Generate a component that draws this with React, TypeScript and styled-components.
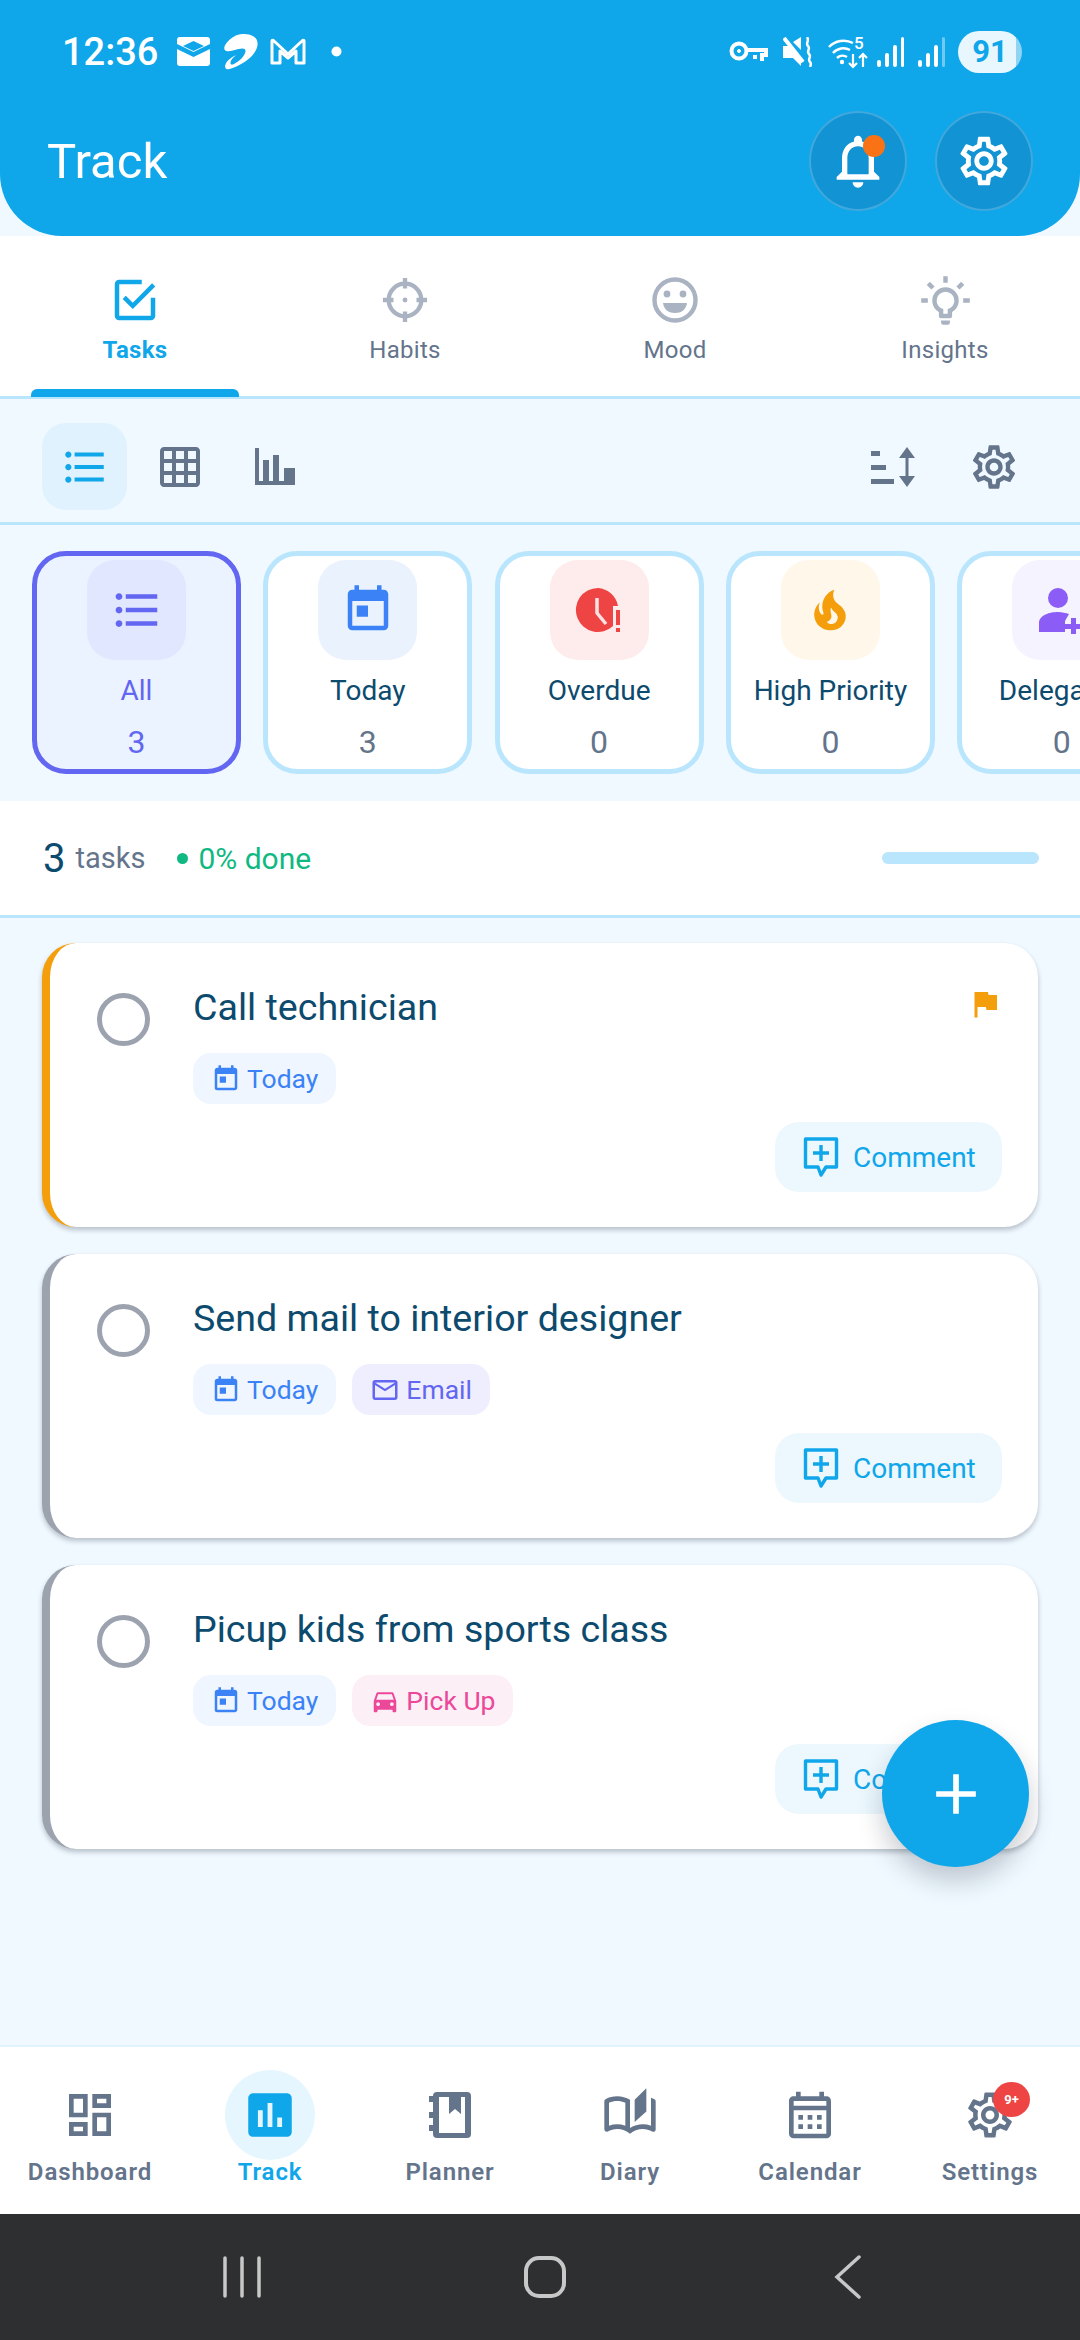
import React from 'react';
import styled, { createGlobalStyle } from 'styled-components';
import {
  MdAdd,
  MdAssessment,
  MdDirectionsCar,
  MdFlag,
  MdFormatListBulleted,
  MdOutlineAutoStories,
  MdOutlineCalendarMonth,
  MdOutlineDashboard,
  MdOutlineEmail,
  MdOutlineGridOn,
  MdOutlineNotifications,
  MdOutlineSettings,
  MdToday,
} from 'react-icons/md';

const GlobalStyle = createGlobalStyle`
  html, body {
    margin: 0;
    padding: 0;
    background: #f0f9ff;
  }
  * {
    box-sizing: border-box;
  }
  body {
    font-family: Roboto, 'Noto Sans', sans-serif;
  }
`;

const Screen = styled.div`
  width: 1080px;
  height: 2340px;
  overflow: hidden;
  position: relative;
  display: flex;
  flex-direction: column;
  background: #f0f9ff;
`;

const Header = styled.header`
  height: 236px;
  flex: none;
  background: #10a6ea;
  border-radius: 0 0 62px 62px;
  color: #fff;
`;

const StatusBar = styled.div`
  height: 103px;
  padding: 0 58px 0 62px;
  display: flex;
  align-items: center;
  justify-content: space-between;
`;

const StatusGroup = styled.div`
  display: flex;
  align-items: center;
`;

const Clock = styled.span`
  font-size: 38px;
  font-weight: 500;
  margin-right: 19px;
`;

const StatusGap = styled.span<{ $w: number }>`
  width: ${(p) => p.$w}px;
`;

const Battery = styled.span`
  width: 64px;
  height: 42px;
  margin-left: 12px;
  border-radius: 21px;
  background: linear-gradient(90deg, #e8f7fe 90%, #8fd3f5 90%);
  color: #10a6ea;
  font-size: 31px;
  font-weight: 700;
  display: flex;
  align-items: center;
  justify-content: center;
`;

const TitleRow = styled.div`
  height: 108px;
  padding: 8px 47px 0;
  display: flex;
  align-items: center;
  justify-content: space-between;
`;

const Title = styled.h1`
  margin: 0;
  font-size: 49px;
  font-weight: 400;
`;

const HeaderActions = styled.div`
  display: flex;
  gap: 28px;
`;

const RoundButton = styled.button`
  width: 98px;
  height: 100px;
  padding: 0;
  position: relative;
  border-radius: 50%;
  border: 2px solid rgba(255, 255, 255, 0.2);
  background: #1193d4;
  color: #fff;
  display: flex;
  align-items: center;
  justify-content: center;
`;

const NotifyDot = styled.span`
  position: absolute;
  top: 22px;
  right: 20px;
  width: 22px;
  height: 22px;
  border-radius: 50%;
  background: #f97316;
`;

const Tabs = styled.nav`
  height: 163px;
  flex: none;
  background: #fff;
  border-bottom: 3px solid #bae6fd;
  display: grid;
  grid-template-columns: repeat(4, 270px);
`;

const Tab = styled.div<{ $active?: boolean }>`
  position: relative;
  padding-top: 38px;
  display: flex;
  flex-direction: column;
  align-items: center;
  color: ${(p) => (p.$active ? '#10a6ea' : '#aab3c1')};
  span {
    margin-top: 10px;
    font-size: 24px;
    line-height: 28px;
    letter-spacing: 0.3px;
    font-weight: ${(p) => (p.$active ? 700 : 400)};
    color: ${(p) => (p.$active ? '#10a6ea' : '#64748b')};
  }
`;

const TabIcon = styled.div`
  height: 52px;
  display: flex;
  align-items: center;
  justify-content: center;
`;

const TabMarker = styled.i`
  position: absolute;
  left: 31px;
  right: 31px;
  bottom: -1px;
  height: 8px;
  border-radius: 6px 6px 0 0;
  background: #10a6ea;
`;

const Toolbar = styled.div`
  height: 126px;
  flex: none;
  padding: 24px 44px 0 42px;
  border-bottom: 3px solid #bae6fd;
  display: flex;
  align-items: flex-start;
  justify-content: space-between;
`;

const ToolGroup = styled.div<{ $gap: number }>`
  display: flex;
  align-items: center;
  gap: ${(p) => p.$gap}px;
`;

const ToolButton = styled.div<{ $active?: boolean }>`
  width: 85px;
  height: 87px;
  border-radius: 24px;
  background: ${(p) => (p.$active ? '#e0f2fe' : 'transparent')};
  color: ${(p) => (p.$active ? '#10a6ea' : '#64748b')};
  display: flex;
  align-items: center;
  justify-content: center;
`;

const FilterStrip = styled.div`
  height: 276px;
  flex: none;
  padding: 26px 0 0 32px;
  display: flex;
  gap: 22.3px;
  overflow: hidden;
`;

const FilterCard = styled.div<{ $active?: boolean }>`
  width: 209px;
  height: 223px;
  flex: none;
  padding-top: 4px;
  border-radius: 34px;
  border: 5px solid ${(p) => (p.$active ? '#6366f1' : '#bae6fd')};
  background: ${(p) => (p.$active ? '#eaf3ff' : '#fff')};
  display: flex;
  flex-direction: column;
  align-items: center;
`;

const FilterTile = styled.div<{ $bg: string; $fg: string }>`
  width: 99px;
  height: 100px;
  flex: none;
  border-radius: 28px;
  background: ${(p) => p.$bg};
  color: ${(p) => p.$fg};
  display: flex;
  align-items: center;
  justify-content: center;
`;

const FilterLabel = styled.div<{ $active?: boolean }>`
  margin-top: 14px;
  font-size: 28px;
  line-height: 33px;
  white-space: nowrap;
  color: ${(p) => (p.$active ? '#6366f1' : '#0c4a6e')};
`;

const FilterCount = styled.div<{ $active?: boolean }>`
  margin-top: 16px;
  font-size: 32px;
  line-height: 38px;
  color: ${(p) => (p.$active ? '#6366f1' : '#64748b')};
`;

const Summary = styled.div`
  height: 117px;
  flex: none;
  padding: 0 41px 0 43px;
  background: #fff;
  border-bottom: 3px solid #bae6fd;
  display: flex;
  align-items: center;
`;

const SummaryCount = styled.span`
  font-size: 40px;
  color: #0c4a6e;
  margin-right: 10px;
`;

const SummaryLabel = styled.span`
  font-size: 29px;
  color: #64748b;
`;

const DoneDot = styled.i`
  width: 11px;
  height: 11px;
  margin: 0 10px 0 32px;
  border-radius: 50%;
  background: #10b981;
`;

const DoneLabel = styled.span`
  font-size: 30px;
  color: #10b981;
`;

const ProgressTrack = styled.div`
  width: 157px;
  height: 12px;
  margin-left: auto;
  border-radius: 6px;
  background: #bae6fd;
`;

const TaskList = styled.div`
  flex: 1;
  min-height: 0;
  padding: 25px 42px 0;
  display: flex;
  flex-direction: column;
  gap: 27px;
`;

const TaskCard = styled.article<{ $accent: string }>`
  height: 284px;
  flex: none;
  position: relative;
  padding: 48px 36px 0 0;
  border-radius: 34px;
  border-left: 8px solid ${(p) => p.$accent};
  background: #fff;
  box-shadow: 0 3px 5px rgba(15, 23, 42, 0.25);
  display: grid;
  grid-template-columns: 143px 1fr;
`;

const CheckCircle = styled.div`
  width: 53px;
  height: 53px;
  margin: 2px 0 0 47px;
  border-radius: 50%;
  border: 5px solid #9ca3af;
`;

const TaskBody = styled.div`
  display: flex;
  flex-direction: column;
`;

const TaskTitle = styled.div`
  height: 35px;
  font-size: 37.6px;
  line-height: 32px;
  color: #0c4a6e;
  display: flex;
  justify-content: space-between;
  svg {
    margin: -5px -1px 0 0;
    color: #f59e0b;
  }
`;

const ChipRow = styled.div`
  margin-top: 27px;
  display: flex;
  gap: 16px;
`;

const Chip = styled.span<{ $bg: string; $fg: string }>`
  height: 51px;
  padding: 0 18px 0 18px;
  border-radius: 18px;
  background: ${(p) => p.$bg};
  color: ${(p) => p.$fg};
  font-size: 26.5px;
  display: flex;
  align-items: center;
  gap: 6px;
`;

const CommentButton = styled.button`
  width: 227px;
  height: 70px;
  margin: 18px 0 0 auto;
  padding: 0 0 0 28px;
  border: 0;
  border-radius: 24px;
  background: #ecf8fe;
  color: #10a6ea;
  font: 400 28px Roboto, sans-serif;
  display: flex;
  align-items: center;
  gap: 14px;
`;

const Fab = styled.button`
  position: absolute;
  left: 882px;
  top: 1720px;
  width: 147px;
  height: 147px;
  padding: 0;
  border: 0;
  border-radius: 50%;
  background: #10a6ea;
  color: #fff;
  box-shadow: 0 14px 26px rgba(15, 23, 42, 0.22);
  display: flex;
  align-items: center;
  justify-content: center;
`;

const BottomNav = styled.nav`
  height: 169px;
  flex: none;
  background: #fff;
  border-top: 2px solid #e0f2fe;
  display: grid;
  grid-template-columns: repeat(6, 180px);
`;

const NavItem = styled.div<{ $active?: boolean }>`
  padding-top: 23px;
  position: relative;
  display: flex;
  flex-direction: column;
  align-items: center;
  color: ${(p) => (p.$active ? '#10a6ea' : '#64748b')};
  span {
    margin-top: -2px;
    font-size: 24px;
    line-height: 28px;
    font-weight: 600;
    letter-spacing: 0.9px;
  }
`;

const NavIcon = styled.div<{ $active?: boolean }>`
  width: 90px;
  height: 90px;
  border-radius: 50%;
  background: ${(p) => (p.$active ? '#e6f6fe' : 'transparent')};
  display: flex;
  align-items: center;
  justify-content: center;
  position: relative;
`;

const NavBadge = styled.b`
  position: absolute;
  top: 12px;
  right: 5px;
  width: 37px;
  height: 35px;
  border-radius: 50%;
  background: #ef4444;
  color: #fff;
  font-size: 13px;
  font-weight: 700;
  display: flex;
  align-items: center;
  justify-content: center;
`;

const SystemBar = styled.div`
  height: 126px;
  flex: none;
  background: #2e2f31;
  display: grid;
  grid-template-columns: repeat(3, 303px);
  padding: 0 0 0 90px;
  align-items: center;
  justify-items: center;
  color: #c8c8c8;
`;

const CommentIcon = () => (
  <svg width="36" height="40" viewBox="0 0 36 40" fill="none" stroke="currentColor" strokeWidth="3.4">
    <path d="M2.500 2h31v28H23l-5 8-3-8H2.500z" strokeLinejoin="round" />
    <path d="M18 8v16M10 16h16" />
  </svg>
);

const TaskIcon = () => (
  <svg width="54" height="54" viewBox="0 0 24 24" fill="currentColor">
    <path d="M19,19H5V5H15V3H5C3.89,3 3,3.89 3,5V19A2,2 0 0,0 5,21H19A2,2 0 0,0 21,19V11H19M7.91,10.08L6.5,11.5L11,16L21,6L19.59,4.58L11,13.17L7.91,10.08Z" />
  </svg>
);

const HabitIcon = () => (
  <svg width="46" height="46" viewBox="0 0 48 48" fill="none" stroke="currentColor" strokeWidth="4.5">
    <circle cx="24" cy="24" r="17" />
    <path d="M24 1v11M24 36v11M1 24h11M36 24h11" />
    <circle cx="24" cy="24" r="2.500" fill="currentColor" stroke="none" />
  </svg>
);

const MoodIcon = () => (
  <svg width="46" height="46" viewBox="0 0 46 46" fill="none" stroke="currentColor" strokeWidth="4.4">
    <circle cx="23" cy="23" r="20.500" />
    <circle cx="15" cy="17" r="3.400" fill="currentColor" stroke="none" />
    <circle cx="31" cy="17" r="3.400" fill="currentColor" stroke="none" />
    <path d="M11 26h24c-1 7-6 10-12 10s-11-3-12-10z" fill="currentColor" stroke="none" />
  </svg>
);

const BulbIcon = () => (
  <svg width="53" height="53" viewBox="0 0 24 24" fill="currentColor">
    <path d="M20,11H23V13H20V11M1,11H4V13H1V11M13,1V4H11V1H13M4.92,3.5L7.05,5.64L5.63,7.05L3.5,4.93L4.92,3.5M16.95,5.63L19.07,3.5L20.5,4.93L18.36,7.05L16.95,5.63M12,6A6,6 0 0,1 18,12C18,14.22 16.79,16.16 15,17.2V19A1,1 0 0,1 14,20H10A1,1 0 0,1 9,19V17.2C7.21,16.16 6,14.22 6,12A6,6 0 0,1 12,6M14,21V22A1,1 0 0,1 13,23H11A1,1 0 0,1 10,22V21H14M11,18H13V15.87C14.73,15.43 16,13.86 16,12A4,4 0 0,0 12,8A4,4 0 0,0 8,12C8,13.86 9.27,15.43 11,15.87V18Z" />
  </svg>
);

const BarsIcon = () => (
  <svg width="40" height="37" viewBox="0 0 40 37" fill="currentColor">
    <path d="M0 0h4v33h36v4H0zM8 12h6v21H8zM18 7h6v26h-6zM29 20h11v13H29z" />
  </svg>
);

const SortIcon = () => (
  <svg width="46" height="40" viewBox="0 0 46 40" fill="currentColor">
    <path d="M0 4h9v5H0zM0 18h15v5H0zM0 32h23v5H0z" />
    <path d="M36 0l8 11h-6.500v18H44l-8 11-8-11h6.500V11H28z" />
  </svg>
);

const OverdueIcon = () => (
  <svg width="48" height="48" viewBox="0 0 48 48">
    <path d="M23 2a22 22 0 1 0 15 38V20h5A22 22 0 0 0 23 2z" fill="#ef4444" />
    <path d="M22 12v15l9 11" fill="none" stroke="#fee2e2" strokeWidth="3.500" />
    <path d="M41 24h4v15h-4zM41 42h4v4h-4z" fill="#ef4444" />
  </svg>
);

const FireIcon = () => (
  <svg width="54" height="54" viewBox="0 0 24 24" fill="currentColor">
    <path d="M17.66 11.2C17.43 10.9 17.15 10.64 16.89 10.38C16.22 9.78 15.46 9.35 14.82 8.72C13.33 7.26 13 4.85 13.95 3C13 3.23 12.17 3.75 11.46 4.32C8.87 6.4 7.85 10.07 9.07 13.22C9.11 13.32 9.15 13.42 9.15 13.55C9.15 13.77 9 13.97 8.8 14.05C8.57 14.15 8.33 14.09 8.14 13.93C8.08 13.88 8.04 13.83 8 13.76C6.87 12.33 6.69 10.28 7.45 8.64C5.78 10 4.87 12.3 5 14.47C5.06 14.97 5.12 15.47 5.29 15.97C5.43 16.57 5.7 17.17 6 17.7C7.08 19.43 8.95 20.67 10.96 20.92C13.1 21.19 15.39 20.8 17.03 19.32C18.86 17.66 19.5 15 18.56 12.72L18.43 12.46C18.22 12 17.66 11.2 17.66 11.2M14.5 17.5C14.22 17.74 13.76 18 13.4 18.1C12.28 18.5 11.16 17.94 10.5 17.28C11.69 17 12.4 16.12 12.61 15.23C12.78 14.43 12.46 13.77 12.33 13C12.21 12.26 12.23 11.63 12.5 10.94C12.69 11.32 12.89 11.7 13.13 12C13.9 13 15.11 13.44 15.37 14.8C15.41 14.94 15.43 15.08 15.43 15.23C15.46 16.05 15.1 16.95 14.5 17.5H14.5Z" />
  </svg>
);

const DelegateIcon = () => (
  <svg width="58" height="48" viewBox="0 0 58 48" fill="#8b5cf6">
    <circle cx="25" cy="12" r="10" />
    <path d="M6 46V37c0-8 11-11 19-11 4 0 8 1 11 2l-4 7v11z" />
    <path d="M38 32h5v6h7v5h-7v6h-5v-6h-7v-5h7z" />
  </svg>
);

const PlannerIcon = () => (
  <svg width="44" height="48" viewBox="0 0 44 48" fill="currentColor">
    <path d="M9 1h30a4 4 0 0 1 4 4v38a4 4 0 0 1-4 4H9a4 4 0 0 1-4-4v-3H1v-6h4V27H1v-6h4V11H1V5h4a4 4 0 0 1 4-4zm2 5v36h26V6h-4v17l-6-5-6 5V6z" />
  </svg>
);

const StatusIcons = () => (
  <>
    <svg width="33" height="29" viewBox="0 0 33 29" fill="#fff">
      <path d="M3 0h27a3 3 0 0 1 3 3v4L16.500 15 0 7V3a3 3 0 0 1 3-3zM0 12l16.500 8L33 12v14a3 3 0 0 1-3 3H3a3 3 0 0 1-3-3z" />
      <path d="M16.500 4L27 9l-10.500 5L6 9z" fill="#10a6ea" />
    </svg>
    <StatusGap $w={12} />
    <svg width="37" height="36" viewBox="0 0 36 36" fill="#fff">
      <path d="M20 0c9 0 16 3 15 11-1 9-11 17-20 21-5 2-9 4-11 3-2-1-2-4 1-8 3-3 6-5 9-6-3 2-6 5-6 8 0 2 2 2 5 0 6-3 10-9 10-12 0-3-3-3-7-2-5 1-9 3-12 2-3-1-3-4 0-8 4-5 10-9 16-9z" />
    </svg>
    <StatusGap $w={11} />
    <svg width="36" height="27" viewBox="0 0 36 27" fill="none" stroke="#fff" strokeWidth="3">
      <path d="M2 25V3c0-1 1-1 2 0l14 13L32 3c1-1 2-1 2 0v22h-8V13l-8 7-8-7v12z" strokeLinejoin="round" />
    </svg>
    <StatusGap $w={25} />
    <svg width="11" height="11" viewBox="0 0 11 11" fill="#fff">
      <circle cx="5.500" cy="5.500" r="5" />
    </svg>
  </>
);

const SystemIcons = () => (
  <>
    <svg width="39" height="24" viewBox="0 0 39 24" fill="none" stroke="#fff" strokeWidth="4">
      <circle cx="10" cy="11" r="7.500" />
      <circle cx="10" cy="11" r="1.500" fill="#fff" strokeWidth="1" />
      <path d="M17 10h20v5h-4v6M26 15v4" />
    </svg>
    <StatusGap $w={15} />
    <svg width="29" height="30" viewBox="0 0 29 30" fill="#fff">
      <path d="M0 9h6l12 12v8l-8-8H0z" />
      <path d="M10 5l8-5v13z" />
      <path d="M1 1l19 24" stroke="#fff" strokeWidth="4" />
      <path d="M24 0c3 4-2 6 1 9s-2 5 1 8-2 5 1 8c1 1 1 3 0 5" fill="none" stroke="#fff" strokeWidth="2.500" />
    </svg>
    <StatusGap $w={16} />
    <svg width="41" height="40" viewBox="0 -4 41 40" fill="none" stroke="#fff" strokeWidth="2.500">
      <path d="M1 11a20 20 0 0 1 24-4M5 17a14 14 0 0 1 17-3M9 22a8 8 0 0 1 10-1" />
      <circle cx="14" cy="26" r="2.200" fill="#fff" stroke="none" />
      <text x="26" y="13" fill="#fff" stroke="none" fontSize="17" fontWeight="500" fontFamily="Roboto, sans-serif">
        5
      </text>
      <path d="M25 18v13M21 27l4 4 4-4M35 31V18M31 22l4-4 4 4" strokeWidth="2.200" />
    </svg>
    <StatusGap $w={8} />
    <svg width="28" height="30" viewBox="0 0 28 30" fill="#fff">
      <rect x="0" y="23" width="4" height="7" rx="2" />
      <rect x="8" y="16" width="4" height="14" rx="2" />
      <rect x="16" y="8" width="4" height="22" rx="2" />
      <rect x="24" y="0" width="3" height="30" rx="1.500" />
    </svg>
    <StatusGap $w={13} />
    <svg width="28" height="30" viewBox="0 0 28 30" fill="#fff">
      <rect x="0" y="23" width="4" height="7" rx="2" />
      <rect x="8" y="16" width="4" height="14" rx="2" />
      <rect x="16" y="8" width="4" height="22" rx="2" />
      <rect x="24" y="0" width="3" height="30" rx="1.500" opacity="0.4" />
    </svg>
  </>
);

const filters = [
  { label: 'All', count: 3, bg: '#e0e7ff', fg: '#6366f1', active: true, icon: <MdFormatListBulleted size={54} /> },
  { label: 'Today', count: 3, bg: '#eaf2fe', fg: '#3b82f6', icon: <MdToday size={54} /> },
  { label: 'Overdue', count: 0, bg: '#feecec', fg: '#ef4444', icon: <OverdueIcon /> },
  { label: 'High Priority', count: 0, bg: '#fff7ea', fg: '#f59e0b', icon: <FireIcon /> },
  { label: 'Delegated', count: 0, bg: '#f5f3ff', fg: '#8b5cf6', icon: <DelegateIcon /> },
];

const tasks = [
  { title: 'Call technician', accent: '#f59e0b', flag: true, extra: null },
  {
    title: 'Send mail to interior designer',
    accent: '#9ca3af',
    flag: false,
    extra: { text: 'Email', bg: '#eeeefe', fg: '#6366f1', icon: <MdOutlineEmail size={30} /> },
  },
  {
    title: 'Picup kids from sports class',
    accent: '#9ca3af',
    flag: false,
    extra: { text: 'Pick Up', bg: '#fdeff6', fg: '#ec4899', icon: <MdDirectionsCar size={30} /> },
  },
];

export default function App() {
  return (
    <Screen>
      <GlobalStyle />
      <Header>
        <StatusBar>
          <StatusGroup>
            <Clock>12:36</Clock>
            <StatusIcons />
          </StatusGroup>
          <StatusGroup>
            <SystemIcons />
            <Battery>91</Battery>
          </StatusGroup>
        </StatusBar>
        <TitleRow>
          <Title>Track</Title>
          <HeaderActions>
            <RoundButton>
              <MdOutlineNotifications size={64} />
              <NotifyDot />
            </RoundButton>
            <RoundButton>
              <MdOutlineSettings size={58} />
            </RoundButton>
          </HeaderActions>
        </TitleRow>
      </Header>

      <Tabs>
        <Tab $active>
          <TabIcon>
            <TaskIcon />
          </TabIcon>
          <span>Tasks</span>
          <TabMarker />
        </Tab>
        <Tab>
          <TabIcon>
            <HabitIcon />
          </TabIcon>
          <span>Habits</span>
        </Tab>
        <Tab>
          <TabIcon>
            <MoodIcon />
          </TabIcon>
          <span>Mood</span>
        </Tab>
        <Tab>
          <TabIcon>
            <BulbIcon />
          </TabIcon>
          <span>Insights</span>
        </Tab>
      </Tabs>

      <Toolbar>
        <ToolGroup $gap={10}>
          <ToolButton $active>
            <MdFormatListBulleted size={50} />
          </ToolButton>
          <ToolButton>
            <MdOutlineGridOn size={48} />
          </ToolButton>
          <ToolButton>
            <BarsIcon />
          </ToolButton>
        </ToolGroup>
        <ToolGroup $gap={15}>
          <ToolButton>
            <SortIcon />
          </ToolButton>
          <ToolButton>
            <MdOutlineSettings size={52} />
          </ToolButton>
        </ToolGroup>
      </Toolbar>

      <FilterStrip>
        {filters.map((f) => (
          <FilterCard key={f.label} $active={f.active}>
            <FilterTile $bg={f.bg} $fg={f.fg}>
              {f.icon}
            </FilterTile>
            <FilterLabel $active={f.active}>{f.label}</FilterLabel>
            <FilterCount $active={f.active}>{f.count}</FilterCount>
          </FilterCard>
        ))}
      </FilterStrip>

      <Summary>
        <SummaryCount>3</SummaryCount>
        <SummaryLabel>tasks</SummaryLabel>
        <DoneDot />
        <DoneLabel>0% done</DoneLabel>
        <ProgressTrack />
      </Summary>

      <TaskList>
        {tasks.map((t) => (
          <TaskCard key={t.title} $accent={t.accent}>
            <CheckCircle />
            <TaskBody>
              <TaskTitle>
                {t.title}
                {t.flag && <MdFlag size={36} />}
              </TaskTitle>
              <ChipRow>
                <Chip $bg="#eff6ff" $fg="#3b82f6">
                  <MdToday size={30} />
                  Today
                </Chip>
                {t.extra && (
                  <Chip $bg={t.extra.bg} $fg={t.extra.fg}>
                    {t.extra.icon}
                    {t.extra.text}
                  </Chip>
                )}
              </ChipRow>
              <CommentButton>
                <CommentIcon />
                Comment
              </CommentButton>
            </TaskBody>
          </TaskCard>
        ))}
      </TaskList>

      <Fab>
        <MdAdd size={68} />
      </Fab>

      <BottomNav>
        <NavItem>
          <NavIcon>
            <MdOutlineDashboard size={56} />
          </NavIcon>
          <span>Dashboard</span>
        </NavItem>
        <NavItem $active>
          <NavIcon $active>
            <MdAssessment size={58} />
          </NavIcon>
          <span>Track</span>
        </NavItem>
        <NavItem>
          <NavIcon>
            <PlannerIcon />
          </NavIcon>
          <span>Planner</span>
        </NavItem>
        <NavItem>
          <NavIcon>
            <MdOutlineAutoStories size={56} />
          </NavIcon>
          <span>Diary</span>
        </NavItem>
        <NavItem>
          <NavIcon>
            <MdOutlineCalendarMonth size={56} />
          </NavIcon>
          <span>Calendar</span>
        </NavItem>
        <NavItem>
          <NavIcon>
            <MdOutlineSettings size={54} />
            <NavBadge>9+</NavBadge>
          </NavIcon>
          <span>Settings</span>
        </NavItem>
      </BottomNav>

      <SystemBar>
        <svg width="40" height="42" viewBox="0 0 40 42" stroke="currentColor" strokeWidth="3.500" strokeLinecap="round">
          <path d="M3 2v38M20 2v38M37 2v38" />
        </svg>
        <svg width="44" height="44" viewBox="0 0 44 44" fill="none" stroke="currentColor" strokeWidth="4">
          <rect x="3" y="3" width="38" height="38" rx="13" />
        </svg>
        <svg width="28" height="44" viewBox="0 0 28 44" fill="none" stroke="currentColor" strokeWidth="3.500" strokeLinecap="round">
          <path d="M25 2L3 22l22 20" />
        </svg>
      </SystemBar>
    </Screen>
  );
}
